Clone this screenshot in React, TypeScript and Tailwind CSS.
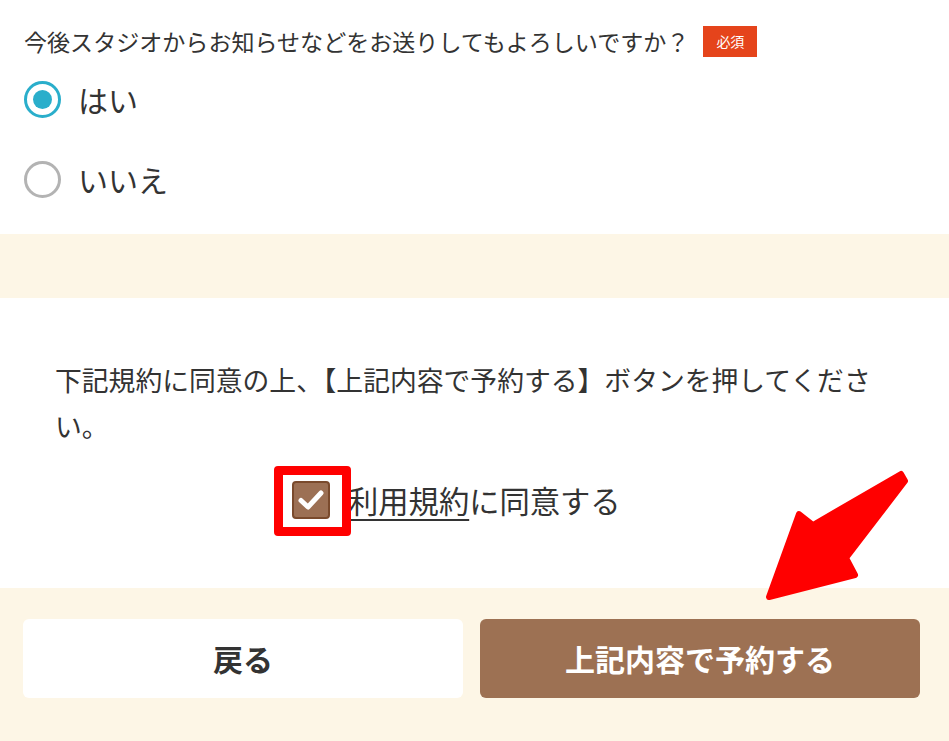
import React from "react";

const font = { fontFamily: '"Noto Sans CJK JP", "Noto Sans", sans-serif' };

export default function App() {
  return (
    <div className="relative w-[949px] h-[741px] overflow-hidden bg-white text-[#333333]" style={font}>
      {/* question */}
      <div className="pl-[24px] pt-[26px] pb-[15px]">
        <div className="flex items-center h-[31px]">
          <span className="text-[23.05px] leading-[31px]">今後スタジオからお知らせなどをお送りしてもよろしいですか？</span>
          <span className="ml-[14px] w-[54px] h-[31px] bg-[#e5441b] text-white text-[14px] flex items-center justify-center">必須</span>
        </div>
        <div className="mt-[2px] flex items-center h-[80px]">
          <span className="w-[37px] h-[37px] rounded-full border-[3px] border-[#2aaecb] flex items-center justify-center">
            <span className="w-[19px] h-[19px] rounded-full bg-[#2aaecb]" />
          </span>
          <span className="ml-[17px] text-[30px] leading-none">はい</span>
        </div>
        <div className="flex items-center h-[80px]">
          <span className="w-[37px] h-[37px] rounded-full border-[3px] border-[#b3b3b3]" />
          <span className="ml-[17px] text-[30px] leading-none">いいえ</span>
        </div>
      </div>

      <div className="h-[64px] bg-[#fdf6e6]" />

      {/* agreement */}
      <div className="pt-[59px] pb-[53px] pl-[55px] pr-[55px]">
        <p className="text-[26.8px] leading-[46px]">下記規約に同意の上、【上記内容で予約する】ボタンを押してください。</p>
        <div className="mt-[16px] h-[70px] flex items-center pl-[237px]">
          <div className="relative w-[38px] h-[38px] rounded-[4px] bg-[#9c7054] border-[2px] border-[#7a4a2c] flex items-center justify-center">
            <svg width="28" height="24" viewBox="0 0 28 24">
              <path d="M4 12.5 L11 19 L24 5" fill="none" stroke="white" strokeWidth="5" strokeLinecap="round" strokeLinejoin="round" />
            </svg>
            <div className="absolute left-[-20px] top-[-17px] w-[77px] h-[70px] border-[9px] border-[#ff0000] rounded-[4px]" />
          </div>
          <span className="ml-[18px] text-[30.3px] leading-none">
            <span className="underline underline-offset-[6px] decoration-[2px]">利用規約</span>に同意する
          </span>
        </div>
      </div>

      {/* buttons */}
      <div className="bg-[#fdf6e6] h-[154px] pt-[31px] pl-[23px] flex gap-[17px] items-start">
        <button className="w-[440px] h-[79px] bg-white rounded-[6px] text-[30px] font-bold text-[#333333] flex items-center justify-center" style={font}>戻る</button>
        <button className="w-[440px] h-[79px] bg-[#9d7153] rounded-[6px] text-[30px] font-bold text-white flex items-center justify-center" style={font}>上記内容で予約する</button>
      </div>

      {/* red arrow annotation */}
      <svg className="absolute left-0 top-0 pointer-events-none" width="949" height="741" viewBox="0 0 949 741">
        <polygon
          points="901,474 905,481 846,558 855,575 769,597 799,514 813,525"
          fill="#ff0000"
          stroke="#ff0000"
          strokeWidth="6"
          strokeLinejoin="round"
        />
      </svg>
    </div>
  );
}
